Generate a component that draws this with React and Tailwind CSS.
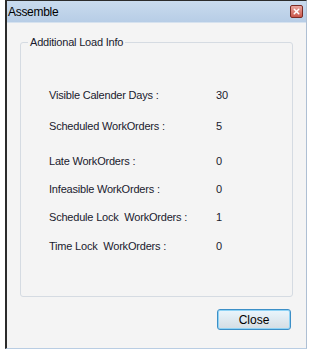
import { X } from 'lucide-react';

const rows = [
  { label: 'Visible Calender Days :', value: '30', h: 'h-[31px]' },
  { label: 'Scheduled WorkOrders :', value: '5', h: 'h-[35px]' },
  { label: 'Late WorkOrders :', value: '0', h: 'h-[28px]' },
  { label: 'Infeasible WorkOrders :', value: '0', h: 'h-[28px]' },
  { label: 'Schedule Lock  WorkOrders :', value: '1', h: 'h-[29px]' },
  { label: 'Time Lock  WorkOrders :', value: '0', h: 'h-[29px]' },
];

export default function App() {
  return (
    <div className="w-[315px] h-[349px] bg-white font-['Liberation_Sans',Arial,sans-serif] text-[11px] tracking-[-0.2px] text-[#1a1a2e]">
      <div className="ml-[5px] w-[302px] h-[349px] border-l-2 border-t border-[#2b2b2b] border-r border-r-[#aebfd3] border-b border-b-[#b9cde3] flex flex-col bg-[#f4f4f4]">
        {/* Title bar */}
        <div className="h-[22px] flex items-center justify-between pl-[1px] pr-[3px] bg-gradient-to-b from-[#c9dbee] to-[#b7cde6] border-b border-[#d6e2ef]">
          <span className="text-[12px] tracking-[-0.3px] text-black">Assemble</span>
          <span className="w-[13px] h-[13px] flex items-center justify-center bg-gradient-to-b from-[#e9a6a0] to-[#c9554a] border border-[#7a2b25] rounded-[2px]">
            <X className="w-[9px] h-[9px] text-white" strokeWidth={4} />
          </span>
        </div>

        {/* Body */}
        <div className="flex-1 flex flex-col px-[13px] pt-[12px]">
          <div className="relative h-[255px] border border-[#d5dbe2] rounded-[3px] mt-[7px]">
            <span className="absolute left-[7px] -top-[8px] px-[2px] bg-[#f4f4f4] leading-[14px]">
              Additional Load Info
            </span>
            <div className="flex flex-col pl-[28px] pt-[44px]">
              {rows.map((r) => (
                <div key={r.label} className={`flex items-start ${r.h}`}>
                  <span className="w-[167px] whitespace-pre">{r.label}</span>
                  <span>{r.value}</span>
                </div>
              ))}
            </div>
          </div>
          <div className="flex justify-end pr-[2px] mt-[12px]">
            <button className="w-[74px] h-[21px] rounded-[3px] border border-[#3c8fc7] bg-gradient-to-b from-[#eaf6fd] to-[#d4dde3] shadow-[inset_0_0_0_1px_#8fd3f5] text-[12px] tracking-normal text-black">
              Close
            </button>
          </div>
        </div>
      </div>
    </div>
  );
}
